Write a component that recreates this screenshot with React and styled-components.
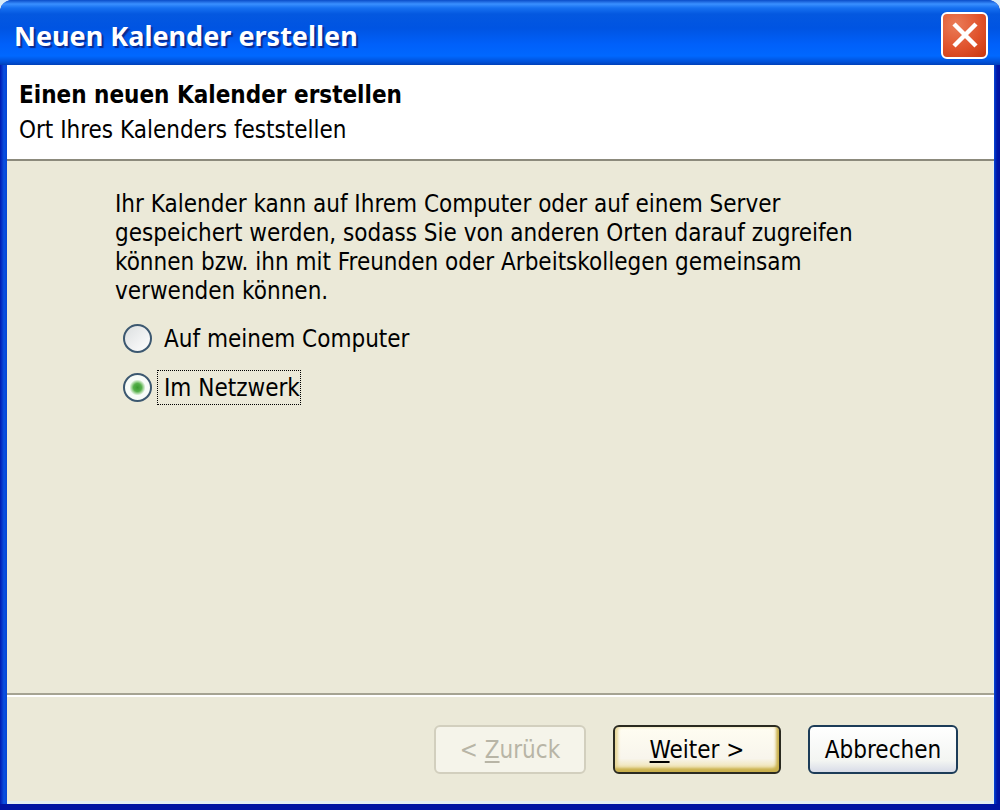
import { useState } from "react";
import styled, { createGlobalStyle } from "styled-components";

const locations = [
  { id: "local", label: "Auf meinem Computer" },
  { id: "network", label: "Im Netzwerk" },
];

const App = () => {
  const [location, setLocation] = useState("network");

  return (
    <>
      <GlobalStyle />
      <Window>
        <TitleBar>
          <Title>Neuen Kalender erstellen</Title>
          <CloseButton type="button" aria-label="Schließen">
            <svg width="28" height="28" viewBox="0 0 28 28" fill="none">
              <path d="M3 3 L25 25 M25 3 L3 25" stroke="#fff" strokeWidth="4.5" />
            </svg>
          </CloseButton>
        </TitleBar>
        <Body>
          <Header>
            <Heading>Einen neuen Kalender erstellen</Heading>
            <Subtitle>Ort Ihres Kalenders feststellen</Subtitle>
          </Header>
          <Content>
            <Description>
              Ihr Kalender kann auf Ihrem Computer oder auf einem Server
              gespeichert werden, sodass Sie von anderen Orten darauf zugreifen
              können bzw. ihn mit Freunden oder Arbeitskollegen gemeinsam
              verwenden können.
            </Description>
            <Options role="radiogroup" aria-label="Ort des Kalenders">
              {locations.map(({ id, label }) => (
                <Option key={id}>
                  <Radio
                    type="radio"
                    name="location"
                    value={id}
                    checked={location === id}
                    onChange={() => setLocation(id)}
                  />
                  <OptionText $focused={location === id}>{label}</OptionText>
                </Option>
              ))}
            </Options>
          </Content>
          <Footer>
            <BackButton type="button" disabled>
              &lt; <u>Z</u>urück
            </BackButton>
            <NextButton type="button">
              <u>W</u>eiter &gt;
            </NextButton>
            <Button type="button">Abbrechen</Button>
          </Footer>
        </Body>
      </Window>
    </>
  );
};

export default App;

const GlobalStyle = createGlobalStyle`
  * {
    box-sizing: border-box;
  }
  body {
    margin: 0;
    background: #d8ecf8;
    color: #000;
    font-family: Tahoma, "DejaVu Sans Condensed", "Noto Sans", sans-serif;
    font-size: 24px;
    line-height: 29px;
  }
`;

const Window = styled.main`
  display: flex;
  flex-direction: column;
  min-height: 100vh;
  padding: 0 6px 6px 7px;
  border-radius: 12px 12px 0 0;
  background: linear-gradient(90deg, #0019b0 0, #0a50e0 4px, #0646d4 7px, #0646d4 calc(100% - 6px), #0018a8 calc(100% - 3px), #0012a0 100%);
  box-shadow: inset 0 -6px #0014a2;
`;

const TitleBar = styled.header`
  display: flex;
  align-items: center;
  justify-content: space-between;
  height: 65px;
  margin: 0 -6px 0 -7px;
  padding: 5px 12px 0 14px;
  border-radius: 12px 12px 0 0;
  background: linear-gradient(180deg, #0a4cc8 0, #3a90ff 4px, #1670f0 8px, #0458e0 14px, #0054e2 28px, #0060fa 44px, #0068ff 56px, #0050d8 62px, #0040b8 65px);
`;

const Title = styled.h1`
  margin: 0;
  padding-top: 2px;
  color: #fff;
  font-family: "Trebuchet MS", "Noto Sans", sans-serif;
  font-size: 27px;
  font-weight: 700;
  line-height: 36px;
  text-shadow: 2px 2px 1px #0a2a90;
`;

const CloseButton = styled.button`
  display: flex;
  align-items: center;
  justify-content: center;
  width: 47px;
  height: 47px;
  padding: 0;
  border: 2px solid #fff;
  border-radius: 6px;
  background: radial-gradient(circle at 30% 25%, #ea7c58, #e0532c 55%, #c8370f);
`;

const Body = styled.div`
  display: flex;
  flex: 1;
  flex-direction: column;
  background: #ebe9d8;
  box-shadow: inset -1px -3px #e2eef0;
`;

const Header = styled.div`
  height: 96px;
  padding: 13px 12px 0;
  border-bottom: 2px solid #8c8a7c;
  background: #fff;
`;

const Heading = styled.h2`
  margin: 0 0 4px;
  font-size: 24px;
  font-weight: 700;
  line-height: 34px;
`;

const Subtitle = styled.p`
  margin: 0;
`;

const Content = styled.section`
  flex: 1;
  padding: 29px 128px 24px 108px;
`;

const Description = styled.p`
  margin: 0 0 15px;
`;

const Options = styled.div`
  display: flex;
  flex-direction: column;
  align-items: flex-start;
  gap: 14px;
  padding-left: 8px;
`;

const Option = styled.label`
  display: flex;
  align-items: center;
  gap: 5px;
`;

const Radio = styled.input`
  appearance: none;
  width: 29px;
  height: 29px;
  margin: 0;
  border: 2px solid #3c5870;
  border-radius: 50%;
  background: linear-gradient(135deg, #dcdfe0, #fff);

  &:checked {
    background: radial-gradient(circle, #3a9a30 0, #55b04a 4px, #a8d8a0 6px, #f8fcf8 8px);
  }
`;

const OptionText = styled.span`
  padding: 3px 0 1px 6px;
  border: 1px dotted ${({ $focused }) => ($focused ? "#000" : "transparent")};
`;

const Footer = styled.footer`
  display: flex;
  justify-content: flex-end;
  gap: 27px;
  height: 111px;
  padding: 30px 36px 0 12px;
  border-top: 2px solid #a5a392;
  box-shadow: inset 0 2px #fff;
`;

const Button = styled.button`
  min-width: 150px;
  height: 49px;
  padding: 2px 12px 0;
  border: 2px solid #1c3c58;
  border-radius: 6px;
  background: linear-gradient(180deg, #fff, #f3f5f2 75%, #d8dce8);
  color: #000;
  font-family: inherit;
  font-size: 24px;
  line-height: 29px;

  u {
    text-underline-offset: 3px;
    text-decoration-thickness: 2px;
  }
`;

const BackButton = styled(Button)`
  min-width: 152px;
  border-color: #d2cfbe;
  background: #f5f4ea;
  color: #b8b5a6;
`;

const NextButton = styled(Button)`
  min-width: 168px;
  border-color: #2a2a20;
  background: linear-gradient(180deg, #fffdf2, #f8f5ec 70%, #ecdc98);
  box-shadow: inset -3px -4px 3px #c9b04c, inset 3px 0 3px #e8d89c;
`;
